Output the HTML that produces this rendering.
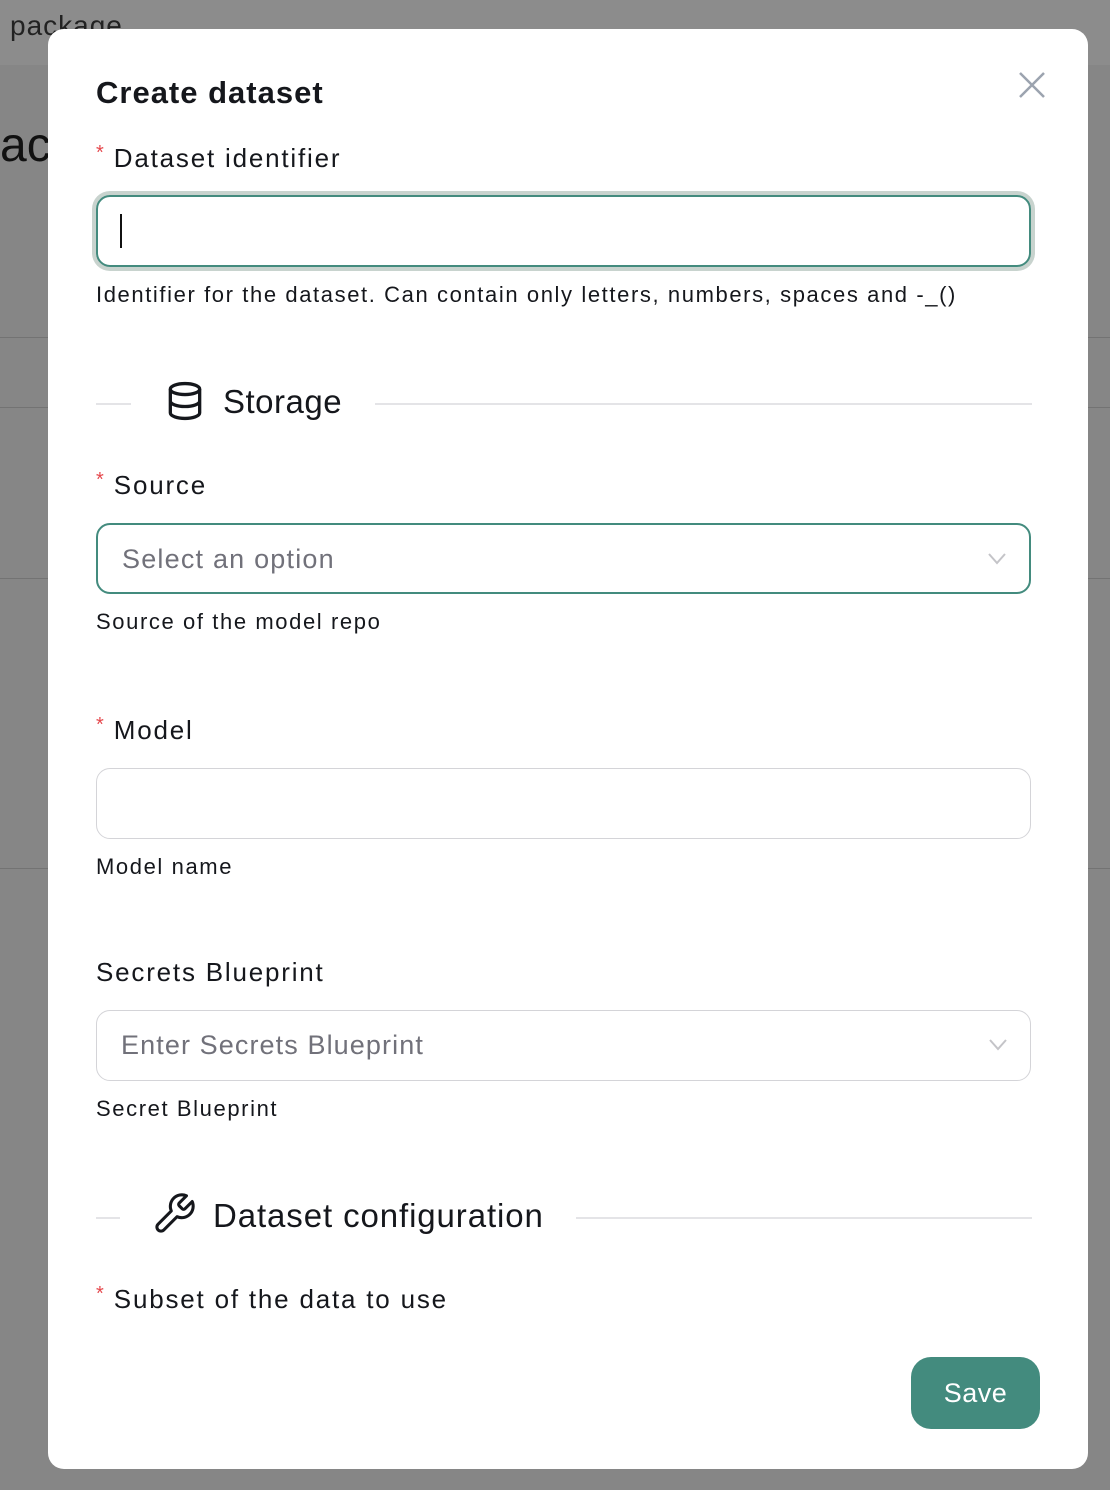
<!DOCTYPE html>
<html><head><meta charset="utf-8"><style>
*{box-sizing:border-box;margin:0;padding:0}
body{width:1110px;height:1490px;background:#868686;position:relative;overflow:hidden;font-family:"Liberation Sans",sans-serif;color:#15171c}
.a{position:absolute}
.line{position:absolute;height:1px;background:#737373}
.modal{position:absolute;left:48px;top:29px;width:1040px;height:1440px;background:#fff;border-radius:16px}
.lbl{position:absolute;font-size:26px;left:48px;letter-spacing:1.8px}
.lbl .s{color:#e5484d;font-size:20px;position:relative;top:-8px;margin-right:10px;letter-spacing:0}
.help{position:absolute;left:48px;font-size:22px;color:#15171c;letter-spacing:1.6px}
.inp{position:absolute;left:48px;width:935px;height:71px;border:1.5px solid #d4d4d8;border-radius:14px}
.ph{position:absolute;left:24px;top:19px;font-size:27px;color:#71717a;letter-spacing:1.2px}
.chev{position:absolute;right:22px;top:26px}
.div{position:absolute;height:1.5px;background:#e4e4e7}
</style></head><body>
<div class="a" style="left:0;top:0;width:1110px;height:65px;background:#8c8c8c"></div>
<div class="a" style="left:10px;top:10px;font-size:28px;color:#222;letter-spacing:1px">package</div>
<div class="a" style="left:0;top:118px;font-size:48px;color:#111">ac</div>
<div class="line" style="left:0;top:337px;width:1110px"></div>
<div class="line" style="left:0;top:407px;width:1110px"></div>
<div class="line" style="left:0;top:578px;width:1110px"></div>
<div class="line" style="left:0;top:868px;width:1110px"></div>
<div class="modal">
  <div class="a" style="left:48px;top:46px;font-size:31px;font-weight:bold;letter-spacing:1px">Create dataset</div>
  <svg class="a" style="left:970px;top:42px" width="28" height="28" viewBox="0 0 28 28"><path d="M2 2L26 26M26 2L2 26" stroke="#9ca3af" stroke-width="2.5"/></svg>
  <div class="lbl" style="top:114px"><span class="s">*</span>Dataset identifier</div>
  <div class="inp" style="top:166px;border:2px solid #438b7e;box-shadow:0 0 0 4px #c8d3ce;height:72px">
    <div class="a" style="left:22px;top:17px;width:2px;height:34px;background:#111"></div>
  </div>
  <div class="help" style="top:253px">Identifier for the dataset. Can contain only letters, numbers, spaces and -_()</div>
  <div class="div" style="left:48px;top:374px;width:35px"></div>
  <svg class="a" style="left:115px;top:350px" width="44" height="44" viewBox="0 0 24 24" fill="none" stroke="#15171c" stroke-width="1.8"><ellipse cx="12" cy="5.5" rx="8" ry="3"/><path d="M4 5.5v13c0 1.7 3.6 3 8 3s8-1.3 8-3v-13M4 12c0 1.7 3.6 3 8 3s8-1.3 8-3"/></svg>
  <div class="a" style="left:175px;top:354px;font-size:33px;letter-spacing:0.5px">Storage</div>
  <div class="div" style="left:327px;top:374px;width:657px"></div>
  <div class="lbl" style="top:441px"><span class="s">*</span>Source</div>
  <div class="inp" style="top:494px;border:2px solid #438b7e"><div class="ph">Select an option</div>
    <svg class="chev" width="20" height="14" viewBox="0 0 20 14"><path d="M2 3l8 9 8-9" fill="none" stroke="#c4c4c8" stroke-width="2"/></svg></div>
  <div class="help" style="top:580px">Source of the model repo</div>
  <div class="lbl" style="top:686px"><span class="s">*</span>Model</div>
  <div class="inp" style="top:739px"></div>
  <div class="help" style="top:825px">Model name</div>
  <div class="lbl" style="top:928px">Secrets Blueprint</div>
  <div class="inp" style="top:981px"><div class="ph" style="letter-spacing:1.1px">Enter Secrets Blueprint</div>
    <svg class="chev" width="20" height="14" viewBox="0 0 20 14"><path d="M2 3l8 9 8-9" fill="none" stroke="#c4c4c8" stroke-width="2"/></svg></div>
  <div class="help" style="top:1067px">Secret Blueprint</div>
  <div class="div" style="left:48px;top:1188px;width:24px"></div>
  <svg class="a" style="left:103px;top:1162px" width="46" height="46" viewBox="0 0 24 24" fill="none" stroke="#15171c" stroke-width="1.6" stroke-linejoin="round"><path d="M14.7 6.3a1 1 0 0 0 0 1.4l1.6 1.6a1 1 0 0 0 1.4 0l3.8-3.8a6 6 0 0 1-7.9 7.9l-6.9 6.9a2.1 2.1 0 0 1-3-3l6.9-6.9a6 6 0 0 1 7.9-7.9z"/></svg>
  <div class="a" style="left:165px;top:1168px;font-size:33px;letter-spacing:0.9px">Dataset configuration</div>
  <div class="div" style="left:528px;top:1188px;width:456px"></div>
  <div class="lbl" style="top:1255px"><span class="s">*</span>Subset of the data to use</div>
  <div class="a" style="left:863px;top:1328px;width:129px;height:72px;background:#438b7e;border-radius:20px;color:#fff;font-size:27px;text-align:center;line-height:72px;letter-spacing:0.5px">Save</div>
</div>
</body></html>
